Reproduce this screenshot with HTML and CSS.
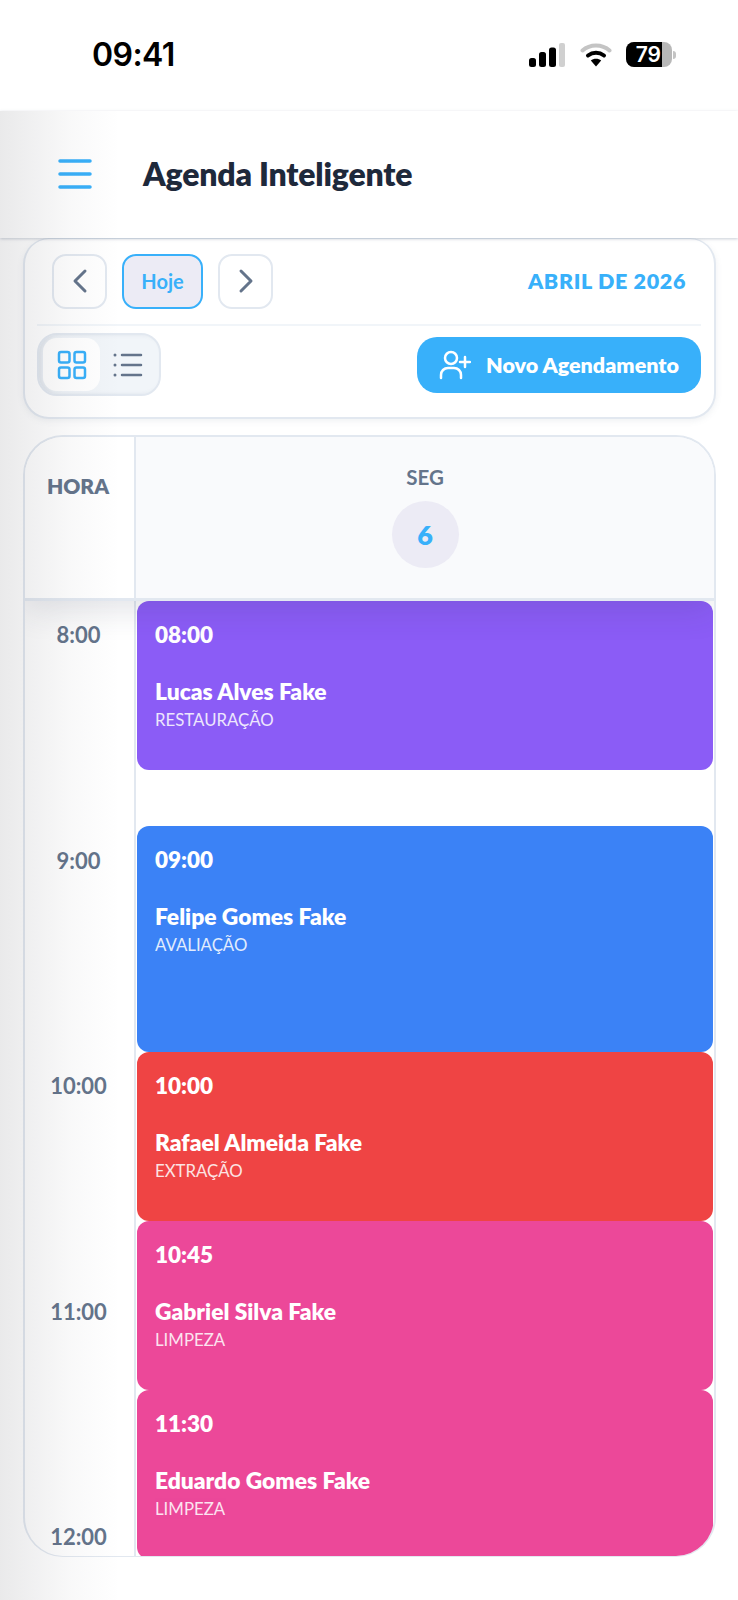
FILE: index.html
```html
<!DOCTYPE html>
<html lang="pt-BR">
<head>
<meta charset="utf-8">
<title>Agenda Inteligente</title>
<link rel="stylesheet" href="styles.css">
</head>
<body>
<div class="status-bar">
  <span class="clock">09:41</span>
  <div class="status-icons">
    <svg class="signal" width="36" height="24" viewBox="0 0 36 24"><rect x="0" y="15" width="7" height="9" rx="2.5" fill="#000"/><rect x="10" y="9" width="7" height="15" rx="2.5" fill="#000"/><rect x="20" y="4.500" width="7" height="19.500" rx="2.500" fill="#000"/><rect x="30" y="0" width="6" height="24" rx="2" fill="#d0d0d0"/></svg>
    <svg class="wifi" width="32" height="25" viewBox="0 0 32 25"><path d="M2.500 8.500C10 1.800 22 1.800 29.500 8.500" fill="none" stroke="#c4c4c4" stroke-width="4" stroke-linecap="round"/><path d="M8 13.500C12.800 9.800 19.200 9.800 24 13.500" fill="none" stroke="#000" stroke-width="4" stroke-linecap="round"/><path d="M16 24.500L10.800 18.500C13.500 16.300 18.500 16.300 21.200 18.500Z" fill="#000"/></svg>
    <div class="battery"><div class="battery-body"><span class="battery-level">79</span><span class="battery-rest"></span></div><span class="battery-nub"></span></div>
  </div>
</div>

<header class="app-header">
  <svg class="menu-icon" width="34" height="32" viewBox="0 0 34 32"><path d="M2 3h30M2 16h30M2 29h30" stroke="#38b0fa" stroke-width="3.500" stroke-linecap="round" fill="none"/></svg>
  <h1 class="app-title">Agenda Inteligente</h1>
</header>

<main class="content">
  <section class="toolbar">
    <div class="toolbar-top">
      <div class="nav-group">
        <button class="nav-btn"><svg width="20" height="26" viewBox="0 0 20 26"><path d="M15 3L5 13l10 10" fill="none" stroke="#64748b" stroke-width="3" stroke-linecap="round" stroke-linejoin="round"/></svg></button>
        <button class="today-btn">Hoje</button>
        <button class="nav-btn"><svg width="20" height="26" viewBox="0 0 20 26"><path d="M5 3l10 10L5 23" fill="none" stroke="#64748b" stroke-width="3" stroke-linecap="round" stroke-linejoin="round"/></svg></button>
      </div>
      <span class="month">ABRIL DE 2026</span>
    </div>
    <div class="toolbar-bottom">
      <div class="view-toggle">
        <div class="view-option is-active"><svg width="30" height="30" viewBox="0 0 30 30"><g fill="none" stroke="#38b0fa" stroke-width="2.500"><rect x="2" y="2" width="10.500" height="10.500" rx="2"/><rect x="17.500" y="2" width="10.500" height="10.500" rx="2"/><rect x="2" y="17.500" width="10.500" height="10.500" rx="2"/><rect x="17.500" y="17.500" width="10.500" height="10.500" rx="2"/></g></svg></div>
        <div class="view-option"><svg class="list-icon" width="30" height="24" viewBox="0 0 30 24"><g stroke="#64748b" stroke-width="2.500" stroke-linecap="round"><path d="M9 2h19M9 12h19M9 22h19"/></g><g fill="#64748b"><circle cx="2" cy="2" r="1.500"/><circle cx="2" cy="12" r="1.500"/><circle cx="2" cy="22" r="1.500"/></g></svg></div>
      </div>
      <button class="new-btn"><svg width="32" height="30" viewBox="0 0 32 30"><g fill="none" stroke="#fff" stroke-width="2.500" stroke-linecap="round"><circle cx="12" cy="8" r="6"/><path d="M2 28v-3c0-4 3-7 7-7h6c4 0 7 3 7 7v3"/><path d="M26 7v10M21 12h10"/></g></svg><span>Novo Agendamento</span></button>
    </div>
  </section>

  <section class="calendar">
    <div class="cal-head">
      <div class="hour-head">HORA</div>
      <div class="day-head">
        <span class="day-name">SEG</span>
        <span class="day-num">6</span>
      </div>
    </div>
    <div class="cal-body">
      <div class="hours">
        <div class="hour">8:00</div>
        <div class="hour">9:00</div>
        <div class="hour">10:00</div>
        <div class="hour">11:00</div>
        <div class="hour">12:00</div>
      </div>
      <div class="events">
        <article class="event event-violet event-gap"><span class="ev-time">08:00</span><span class="ev-name">Lucas Alves Fake</span><span class="ev-type">RESTAURAÇÃO</span></article>
        <article class="event event-blue event-long"><span class="ev-time">09:00</span><span class="ev-name">Felipe Gomes Fake</span><span class="ev-type">AVALIAÇÃO</span></article>
        <article class="event event-red"><span class="ev-time">10:00</span><span class="ev-name">Rafael Almeida Fake</span><span class="ev-type">EXTRAÇÃO</span></article>
        <article class="event event-pink"><span class="ev-time">10:45</span><span class="ev-name">Gabriel Silva Fake</span><span class="ev-type">LIMPEZA</span></article>
        <article class="event event-pink"><span class="ev-time">11:30</span><span class="ev-name">Eduardo Gomes Fake</span><span class="ev-type">LIMPEZA</span></article>
      </div>
    </div>
  </section>
</main>
<div class="side-shade"></div>
</body>
</html>
```
FILE: styles.css
```css
* { box-sizing: border-box; }
html, body { margin: 0; padding: 0; }
body {
  width: 738px;
  height: 1600px;
  overflow: hidden;
  background: #fff;
  font-family: "Lato", "Noto Sans", sans-serif;
  color: #1e293b;
  position: relative;
}
button { font-family: inherit; padding: 0; cursor: pointer; }

.status-bar {
  height: 111px;
  background: #fff;
  display: flex;
  justify-content: space-between;
  align-items: flex-start;
  padding: 36px 62px 0 92px;
}
.clock {
  font-family: "Inter", "Liberation Sans", sans-serif;
  font-size: 32px;
  line-height: 38px;
  font-weight: 600;
  color: #000;
  letter-spacing: -0.6px;
}
.status-icons { display: flex; align-items: center; gap: 14px; padding-top: 6px; }
.signal { margin-right: 1px; }
.battery { display: flex; align-items: center; gap: 1px; }
.battery-body {
  width: 46px;
  height: 25px;
  border-radius: 8px;
  overflow: hidden;
  display: flex;
  background: #b8b8b8;
}
.battery-level {
  width: 36px;
  background: #000;
  color: #fff;
  font-family: "Inter", "Liberation Sans", sans-serif;
  font-size: 21px;
  font-weight: 600;
  line-height: 25px;
  text-align: right;
  padding-right: 1px;
}
.battery-rest { flex: 1; }
.battery-nub { width: 3px; height: 8px; border-radius: 0 3px 3px 0; background: #c4c4c4; }

.app-header {
  height: 127px;
  background: #fff;
  display: flex;
  align-items: center;
  gap: 51px;
  padding: 0 0 1px 58px;
  position: relative;
  z-index: 2;
  box-shadow: 0 1px 3px rgba(100, 116, 139, 0.35);
}
.menu-icon { flex: none; margin-top: -1px; }
.app-title { margin: 0; font-size: 32px; line-height: 40px; font-weight: 800; color: #1e293b; letter-spacing: -0.2px; }

.content { padding: 0 22px 0 23px; }

.toolbar {
  height: 181px;
  background: #fff;
  border: 2px solid #e2e8f0;
  border-top-width: 1px;
  border-radius: 26px;
  box-shadow: 0 2px 6px rgba(100, 116, 139, 0.1);
  padding: 15px 13px 0 12px;
}
.toolbar-top {
  display: flex;
  justify-content: space-between;
  align-items: center;
  height: 72px;
  padding: 0 15px 16px 15px;
  border-bottom: 2px solid #f1f5f9;
}
.nav-group { display: flex; gap: 15px; }
.nav-btn {
  width: 55px;
  height: 55px;
  border: 2px solid #e2e8f0;
  border-radius: 14px;
  background: #fff;
  display: flex;
  align-items: center;
  justify-content: center;
}
.today-btn {
  width: 81px;
  height: 55px;
  border: 2px solid #38b0fa;
  border-radius: 14px;
  background: #ecebf5;
  color: #38b0fa;
  font-size: 20px;
  font-weight: 700;
}
.month { font-size: 21.500px; font-weight: 800; color: #38b0fa; letter-spacing: 0.65px; }

.toolbar-bottom {
  display: flex;
  justify-content: space-between;
  align-items: flex-start;
  padding-top: 7px;
}
.view-toggle {
  width: 124px;
  height: 63px;
  background: #f1f5f9;
  border: 2px solid #e2e8f0;
  border-radius: 20px;
  padding: 3px 0 3px 4px;
  display: flex;
  box-shadow: inset 3px 0 4px rgba(100, 116, 139, 0.12);
}
.view-option {
  width: 57px;
  height: 53px;
  display: flex;
  align-items: center;
  justify-content: center;
  border-radius: 14px;
}
.view-option.is-active { background: #fff; }
.list-icon { margin-left: -2px; }
.new-btn {
  margin-top: 4px;
  width: 284px;
  height: 56px;
  border: none;
  border-radius: 20px;
  background: #38b0fa;
  color: #fff;
  display: flex;
  align-items: center;
  justify-content: center;
  gap: 15px;
  font-size: 21.500px;
  font-weight: 800;
}

.calendar {
  margin-top: 16px;
  height: 1122px;
  background: #fff;
  border: 2px solid #e2e8f0;
  border-bottom-width: 1px;
  border-radius: 40px;
  overflow: hidden;
}
.cal-head {
  display: flex;
  height: 164px;
  border-bottom: 3px solid #e2e8f0;
  position: relative;
  z-index: 1;
  box-shadow: 0 8px 32px rgba(40, 50, 80, 0.14);
}
.hour-head {
  width: 111px;
  flex: none;
  background: #fff;
  border-right: 2px solid #e2e8f0;
  font-size: 21px;
  font-weight: 800;
  color: #64748b;
  text-align: center;
  padding: 36px 3px 0 0;
  line-height: 26px;
}
.day-head {
  flex: 1;
  background: #f9fafc;
  display: flex;
  flex-direction: column;
  align-items: center;
  padding-top: 28px;
}
.day-name { font-size: 20.500px; font-weight: 700; color: #64748b; line-height: 24px; }
.day-num {
  margin-top: 12px;
  width: 67px;
  height: 67px;
  border-radius: 50%;
  background: #ecebf5;
  color: #38b0fa;
  font-size: 27px;
  font-weight: 800;
  display: flex;
  align-items: center;
  justify-content: center;
}
.cal-body { display: flex; }
.hours { width: 111px; flex: none; border-right: 2px solid #e2e8f0; }
.hour {
  height: 225.500px;
  text-align: center;
  padding: 21px 2px 0 0;
  font-size: 22px;
  line-height: 26px;
  font-weight: 700;
  color: #64748b;
}
.events { flex: 1; padding: 0 1px 0 1px; }
.event {
  height: 169px;
  border-radius: 12px;
  color: #fff;
  padding: 21px 18px 0;
  display: flex;
  flex-direction: column;
}
.event-gap { margin-bottom: 56px; }
.event-long { height: 226px; }
.event-violet { background: #8b5cf6; }
.event-blue { background: #3b82f6; }
.event-red { background: #ef4444; }
.event-pink { background: #ec4899; }
.ev-time { font-size: 22.500px; line-height: 26px; font-weight: 800; }
.ev-name { margin-top: 30px; font-size: 22.800px; line-height: 26px; font-weight: 800; }
.ev-type { margin-top: 5px; font-size: 16.800px; line-height: 22px; font-weight: 400; opacity: 0.85; }

.side-shade {
  position: absolute;
  left: 0;
  top: 111px;
  bottom: 0;
  width: 120px;
  background: linear-gradient(to right, rgba(60, 60, 70, 0.11), rgba(60, 60, 70, 0.03) 60%, rgba(60, 60, 70, 0));
  pointer-events: none;
  z-index: 3;
}
```
